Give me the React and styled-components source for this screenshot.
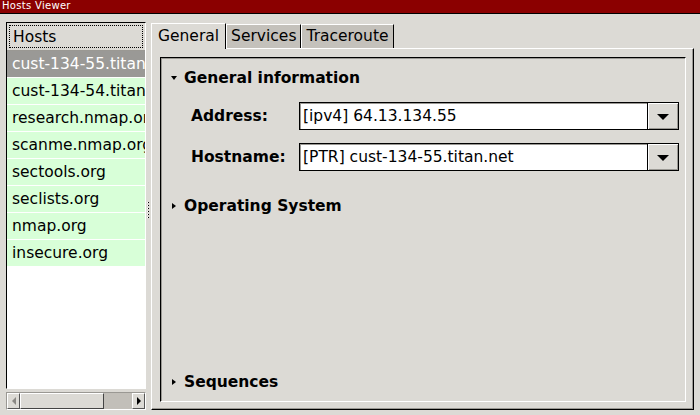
import React from "react";
import styled, { createGlobalStyle } from "styled-components";

const GlobalStyle = createGlobalStyle`
  html, body {
    margin: 0;
    padding: 0;
    background: #dcdad5;
  }
  body {
    font-family: "DejaVu Sans", "Liberation Sans", sans-serif;
  }
`;

const Window = styled.div`
  width: 700px;
  height: 415px;
  display: flex;
  flex-direction: column;
  background: #dcdad5;
  overflow: hidden;
`;

const TitleBar = styled.div`
  height: 13px;
  background: #8b0000;
  border-bottom: 1px solid #000;
  color: #fff;
  font-size: 10px;
  line-height: 12px;
  padding-left: 2px;
  letter-spacing: 0.3px;
`;

const Body = styled.div`
  flex: 1;
  display: flex;
  padding: 8px 6px 5px 6px;
  min-height: 0;
`;

const LeftPane = styled.div`
  width: 140px;
  display: flex;
  flex-direction: column;
`;

const List = styled.div`
  flex: 1;
  background: #fff;
  border: 1px solid #000;
  border-right-color: #fff;
  border-bottom-color: #fff;
  overflow: hidden;
  display: flex;
  flex-direction: column;
`;

const ListHeader = styled.div`
  height: 28px;
  flex: none;
  background: #dcdad5;
  border-bottom: 1px solid #9a9893;
  box-sizing: border-box;
  padding: 2px;
`;

const HeaderFocus = styled.div`
  height: 100%;
  border: 1px dotted #000;
  box-sizing: border-box;
  font-size: 15.5px;
  line-height: 22px;
  padding-left: 3px;
  color: #000;
`;

const Row = styled.div`
  height: 26px;
  flex: none;
  border-bottom: 1px solid #fff;
  background: ${(p) => (p.$selected ? "#9a9996" : "#d8ffd8")};
  color: ${(p) => (p.$selected ? "#fff" : "#000")};
  font-size: 15.5px;
  line-height: 27px;
  padding-left: 5px;
  white-space: nowrap;
  overflow: hidden;
`;

const HScroll = styled.div`
  height: 16px;
  margin-top: 3px;
  display: flex;
  background: #c2bfb9;
  border: 1px solid #9a9893;
  border-bottom-color: #fff;
  border-right-color: #fff;
`;

const ScrollButton = styled.div`
  width: 13px;
  background: #dcdad5;
  border: 1px solid #fff;
  border-right-color: #555;
  border-bottom-color: #555;
  display: flex;
  align-items: center;
  justify-content: center;
  box-sizing: border-box;
`;

const Thumb = styled.div`
  width: 84px;
  background: #dcdad5;
  border: 1px solid #fff;
  border-right-color: #444;
  border-bottom-color: #444;
  box-sizing: border-box;
`;

const Trough = styled.div`
  flex: 1;
`;

const Arrow = styled.div`
  width: 0;
  height: 0;
  border-top: 4px solid transparent;
  border-bottom: 4px solid transparent;
  ${(p) =>
    p.$dir === "left"
      ? "border-right: 4px solid #8a8884;"
      : "border-left: 4px solid #000;"}
`;

const Divider = styled.div`
  width: 5px;
  display: flex;
  align-items: center;
  justify-content: center;
  padding-bottom: 12px;
`;

const Grip = styled.div`
  display: flex;
  flex-direction: column;
  gap: 2px;
  margin-left: -1px;
`;

const GripDot = styled.div`
  width: 1px;
  height: 1px;
  border-left: 1px solid #fff;
  background: #000;
  box-sizing: content-box;
`;

const RightPane = styled.div`
  flex: 1;
  display: flex;
  flex-direction: column;
`;

const Tabs = styled.div`
  display: flex;
  align-items: flex-end;
  height: 26px;
  flex: none;
`;

const Tab = styled.div`
  height: ${(p) => (p.$active ? "26px" : "24px")};
  box-sizing: border-box;
  padding: 0 ${(p) => (p.$active ? "6px" : "4px")};
  background: ${(p) => (p.$active ? "#dcdad5" : "#c4c1bb")};
  border: 1px solid #fff;
  border-right-color: #000;
  border-bottom: none;
  font-size: 15.5px;
  line-height: ${(p) => (p.$active ? "24px" : "22px")};
  color: #000;
  margin-bottom: ${(p) => (p.$active ? "-1px" : "0")};
  position: relative;
  z-index: ${(p) => (p.$active ? 1 : 0)};
`;

const Page = styled.div`
  flex: 1;
  border: 1px solid #fff;
  border-right-color: #000;
  border-bottom-color: #000;
  box-shadow: inset -1px -1px 0 #9a9893;
  padding: 8px 7px 7px 8px;
  display: flex;
  min-height: 0;
`;

const Frame = styled.div`
  flex: 1;
  border: 1px solid #000;
  border-right-color: #fff;
  border-bottom-color: #fff;
  box-shadow: inset 1px 1px 0 #9a9893;
  display: flex;
  flex-direction: column;
  padding: 9px 6px 8px 9px;
`;

const Expander = styled.div`
  display: flex;
  align-items: center;
  height: 22px;
  font-size: 15.5px;
  font-weight: bold;
  color: #000;
  gap: 6px;
`;

const Triangle = styled.div`
  width: 0;
  height: 0;
  ${(p) =>
    p.$open
      ? `border-left: 3px solid transparent;
         border-right: 3px solid transparent;
         border-top: 4px solid #000;`
      : `border-top: 3.5px solid transparent;
         border-bottom: 3.5px solid transparent;
         border-left: 4px solid #000;`}
`;

const TriangleBox = styled.div`
  width: 8px;
  display: flex;
  justify-content: center;
`;

const Fields = styled.div`
  display: grid;
  grid-template-columns: 108px 1fr;
  row-gap: 13px;
  padding: 13px 0 0 21px;
  align-items: center;
`;

const Label = styled.div`
  font-size: 15.5px;
  font-weight: bold;
  color: #000;
`;

const Combo = styled.div`
  height: 28px;
  display: flex;
  box-sizing: border-box;
`;

const ComboEntry = styled.div`
  flex: 1;
  background: #fff;
  border: 1px solid #000;
  border-right: none;
  box-shadow: inset 1px 1px 0 #9a9893;
  font-size: 15.5px;
  line-height: 26px;
  padding-left: 3px;
  color: #000;
  white-space: nowrap;
`;

const ComboButton = styled.div`
  width: 32px;
  background: #dcdad5;
  border: 1px solid #000;
  box-shadow: inset 1px 1px 0 #fff, inset -1px -1px 0 #9a9893;
  display: flex;
  align-items: center;
  justify-content: center;
  box-sizing: border-box;
`;

const DownArrow = styled.div`
  width: 0;
  height: 0;
  border-left: 6px solid transparent;
  border-right: 6px solid transparent;
  border-top: 6px solid #000;
  margin-top: 1px;
`;

const Gap = styled.div`
  height: ${(p) => p.$h}px;
  flex: none;
`;

const Spacer = styled.div`
  flex: 1;
`;

const hosts = [
  "cust-134-55.titan.net",
  "cust-134-54.titan.net",
  "research.nmap.org",
  "scanme.nmap.org",
  "sectools.org",
  "seclists.org",
  "nmap.org",
  "insecure.org",
];

const App = () => {
  return (
    <>
      <GlobalStyle />
      <Window>
        <TitleBar>Hosts Viewer</TitleBar>
        <Body>
          <LeftPane>
            <List>
              <ListHeader>
                <HeaderFocus>Hosts</HeaderFocus>
              </ListHeader>
              {hosts.map((h, i) => (
                <Row key={h} $selected={i === 0}>
                  {h}
                </Row>
              ))}
            </List>
            <HScroll>
              <ScrollButton>
                <Arrow $dir="left" />
              </ScrollButton>
              <Thumb />
              <Trough />
              <ScrollButton>
                <Arrow $dir="right" />
              </ScrollButton>
            </HScroll>
          </LeftPane>
          <Divider>
            <Grip>
              {[0, 1, 2, 3, 4, 5].map((i) => (
                <GripDot key={i} />
              ))}
            </Grip>
          </Divider>
          <RightPane>
            <Tabs>
              <Tab $active>General</Tab>
              <Tab>Services</Tab>
              <Tab>Traceroute</Tab>
            </Tabs>
            <Page>
              <Frame>
                <Expander>
                  <TriangleBox>
                    <Triangle $open />
                  </TriangleBox>
                  General information
                </Expander>
                <Fields>
                  <Label>Address:</Label>
                  <Combo>
                    <ComboEntry>[ipv4] 64.13.134.55</ComboEntry>
                    <ComboButton>
                      <DownArrow />
                    </ComboButton>
                  </Combo>
                  <Label>Hostname:</Label>
                  <Combo>
                    <ComboEntry>[PTR] cust-134-55.titan.net</ComboEntry>
                    <ComboButton>
                      <DownArrow />
                    </ComboButton>
                  </Combo>
                </Fields>
                <Gap $h={24} />
                <Expander>
                  <TriangleBox>
                    <Triangle />
                  </TriangleBox>
                  Operating System
                </Expander>
                <Spacer />
                <Expander>
                  <TriangleBox>
                    <Triangle />
                  </TriangleBox>
                  Sequences
                </Expander>
              </Frame>
            </Page>
          </RightPane>
        </Body>
      </Window>
    </>
  );
};

export default App;
